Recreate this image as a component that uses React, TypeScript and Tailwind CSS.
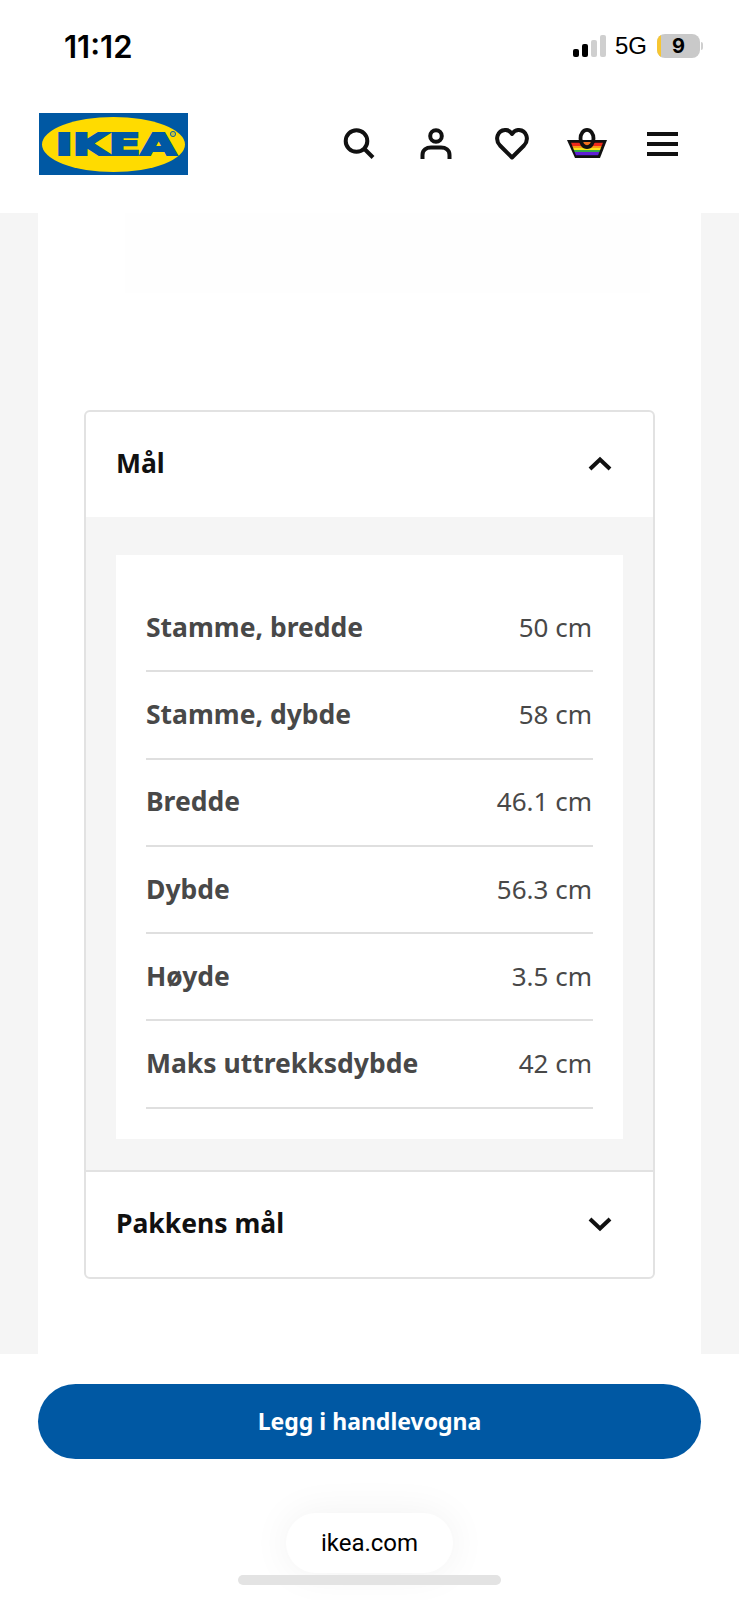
import React from 'react'

const specs = [
  { label: 'Stamme, bredde', value: '50 cm' },
  { label: 'Stamme, dybde', value: '58 cm' },
  { label: 'Bredde', value: '46.1 cm' },
  { label: 'Dybde', value: '56.3 cm' },
  { label: 'Høyde', value: '3.5 cm' },
  { label: 'Maks uttrekksdybde', value: '42 cm' },
]

function StatusBar() {
  return (
    <div className="flex h-[94px] items-start justify-between pl-[64px] pr-[36px] pt-[29px]">
      <span className="font-['Inter',sans-serif] text-[31px] leading-[36px] font-semibold text-black">11:12</span>
      <div className="flex items-center pt-[2px]">
        <svg width="33" height="24" viewBox="0 0 33 24" className="mr-[9px]">
          <rect x="0" y="15" width="6" height="8" rx="2" fill="#000" />
          <rect x="9" y="10" width="6" height="13" rx="2" fill="#000" />
          <rect x="18" y="6" width="6" height="17" rx="2" fill="#cfcfcf" />
          <rect x="27" y="1" width="6" height="22" rx="2" fill="#cfcfcf" />
        </svg>
        <span className="font-['Liberation_Sans',sans-serif] text-[24px] leading-[30px] text-black">5G</span>
        <div className="relative ml-[10px] flex h-[24px] w-[43px] items-center justify-center overflow-hidden rounded-[8px] bg-[#c9c9c9]">
          <div className="absolute left-0 top-0 h-full w-[4px] bg-[#f7c631]" />
          <span className="font-['Inter',sans-serif] text-[20px] leading-none font-bold text-black">9</span>
        </div>
        <div className="ml-[1px] h-[8px] w-[2px] rounded-r-sm bg-[#cfcfcf]" />
      </div>
    </div>
  )
}

function Logo() {
  return (
    <svg width="149" height="62" viewBox="0 0 149 62">
      <rect width="149" height="62" fill="#0058a3" />
      <ellipse cx="74.500" cy="31.500" rx="71.500" ry="27.500" fill="#ffdb00" />
      <text
        x="16.500"
        y="42"
        textLength="121"
        lengthAdjust="spacingAndGlyphs"
        fontFamily="'DejaVu Sans', sans-serif"
        fontWeight="700"
        fontSize="30"
        fill="#0058a3"
        stroke="#0058a3"
        strokeWidth="2"
      >
        IKEA
      </text>
      <circle cx="134" cy="21" r="2.600" fill="#c9c23a" stroke="#0058a3" strokeWidth="0.900" />
    </svg>
  )
}

function NavIcons() {
  return (
    <div className="flex items-center">
      {/* search */}
      <svg width="32" height="32" viewBox="0 0 32 32" fill="none" stroke="#111" strokeWidth="4" className="mr-[45px]">
        <circle cx="13.500" cy="13" r="10.800" />
        <path d="M21.500 21 L30 29.500" />
      </svg>
      {/* account */}
      <svg width="32" height="32" viewBox="0 0 32 32" fill="none" stroke="#111" strokeWidth="4" className="mr-[43px]">
        <circle cx="16" cy="8" r="5.800" />
        <path d="M2.500 31 V27 C2.500 22 6.500 19.500 11 19.500 H21 C25.500 19.500 29.500 22 29.500 27 V31" />
      </svg>
      {/* favourites */}
      <svg width="34" height="32" viewBox="0 0 34 32" fill="none" stroke="#111" strokeWidth="4" className="mr-[38px]">
        <path d="M17 29.500 L5 17.500 C-0.500 11.500 2.500 2.500 10 2 C13 1.800 15.500 3.500 17 6 C18.500 3.500 21 1.800 24 2 C31.500 2.500 34.500 11.500 29 17.500 Z" strokeLinejoin="round" />
      </svg>
      {/* basket with pride stripes */}
      <svg width="40" height="32" viewBox="0 0 40 32" className="mr-[40px]">
        <defs>
          <clipPath id="basket-stripes">
            <path d="M4 14.500 H36 L31 27.500 H9 Z" />
          </clipPath>
        </defs>
        <path d="M0 12 H40 L33 30 H8 Z" fill="#111" />
        <g clipPath="url(#basket-stripes)">
          <rect x="0" y="14.500" width="40" height="3.500" fill="#ee2a1b" />
          <rect x="0" y="18" width="40" height="2" fill="#fb9a16" />
          <rect x="0" y="20" width="40" height="2" fill="#f6e51c" />
          <rect x="0" y="22" width="40" height="2" fill="#35a845" />
          <rect x="0" y="24" width="40" height="3.500" fill="#5f1fd6" />
        </g>
        <path d="M14 14 C14.500 20 25.500 20 26 14 Z" fill="#f4701c" />
        <ellipse cx="20" cy="10.500" rx="6.500" ry="8.600" fill="none" stroke="#111" strokeWidth="3.800" />
      </svg>
      <svg width="31" height="27" viewBox="0 0 31 27" fill="#111">
        <rect x="0" y="1" width="31" height="4" />
        <rect x="0" y="11" width="31" height="4" />
        <rect x="0" y="21" width="31" height="4" />
      </svg>
    </div>
  )
}

function Chevron({ up }: { up?: boolean }) {
  return (
    <svg width="24" height="16" viewBox="0 0 24 16" fill="none" stroke="#111" strokeWidth="4">
      <path d={up ? 'M2 13 L12 3.500 L22 13' : 'M2 3 L12 12.500 L22 3'} />
    </svg>
  )
}

export default function App() {
  return (
    <div className="flex h-[1600px] w-[739px] flex-col overflow-hidden bg-white font-['Noto_Sans',sans-serif]">
      <header className="h-[213px] shrink-0 bg-white">
        <StatusBar />
        <div className="flex items-center justify-between pl-[39px] pr-[61px] pt-[19px]">
          <Logo />
          <NavIcons />
        </div>
      </header>

      <main className="h-[1141px] shrink-0 bg-[#f5f5f5] px-[38px]">
        <div className="h-full bg-white px-[46px]">
          <div className="ml-[41px] mr-[5px] h-[80px] bg-[#fefefe]" />
          <div className="mt-[117px] overflow-hidden rounded-[6px] border-2 border-[#e2e2e2]">
            <div className="flex h-[105px] items-center justify-between pb-[2px] pl-[30px] pr-[41px] text-[26.5px] font-bold text-[#111]">
              <span>Mål</span>
              <Chevron up />
            </div>
            <div className="border-b-2 border-[#e2e2e2] bg-[#f5f5f5] px-[30px] pb-[31px] pt-[38px]">
              <div className="bg-white px-[30px] py-[30px]">
                {specs.map((spec) => (
                  <div key={spec.label} className="flex h-[87.3px] items-center justify-between border-b-2 border-[#dfdfdf] text-[#484848]">
                    <span className="text-[26.5px] font-bold">{spec.label}</span>
                    <span className="pr-[1px] pb-[1px] text-[26px]">{spec.value}</span>
                  </div>
                ))}
              </div>
            </div>
            <div className="flex h-[105px] items-center justify-between pl-[30px] pr-[41px] text-[26.5px] font-bold text-[#111]">
              <span>Pakkens mål</span>
              <Chevron />
            </div>
          </div>
        </div>
      </main>

      <footer className="flex flex-1 flex-col items-center bg-white px-[38px] pt-[30px]">
        <button className="flex h-[75px] w-full items-center justify-center rounded-full bg-[#0058a3] text-[23px] font-bold text-white">
          Legg i handlevogna
        </button>
        <div className="mt-[54px] flex h-[60px] w-[167px] items-center justify-center rounded-[30px] bg-white font-['Roboto',sans-serif] text-[24px] text-black shadow-[0_0_40px_rgba(0,0,0,0.06)]">
          ikea.com
        </div>
        <div className="mt-[2px] h-[10px] w-[263px] rounded-full bg-[#e3e3e3]" />
      </footer>
    </div>
  )
}
